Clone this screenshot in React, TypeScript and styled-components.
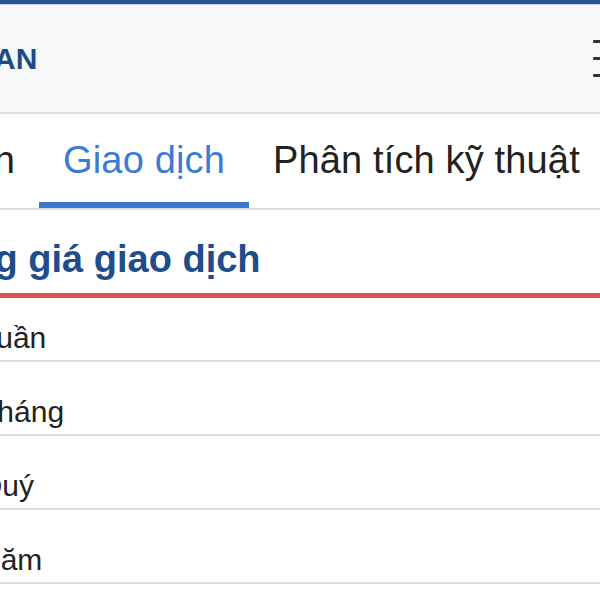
import styled, { createGlobalStyle } from 'styled-components';

const GlobalStyle = createGlobalStyle`
  html, body {
    margin: 0;
    padding: 0;
    background: #ffffff;
    overflow: hidden;
  }
  body {
    font-family: "Liberation Sans", Arial, sans-serif;
  }
`;

// the screenshot shows a horizontally scrolled view, so the page is shifted left
const Viewport = styled.div`
  width: 600px;
  height: 600px;
  overflow: hidden;
`;

const Page = styled.div`
  width: 840px;
  margin-left: -200px;
`;

const TopBar = styled.div`
  height: 4px;
  background: #2a5694;
  border-bottom: 1px solid #c9d5ea;
`;

const Header = styled.header`
  height: 109px;
  box-sizing: border-box;
  display: flex;
  align-items: center;
  justify-content: space-between;
  padding: 0 17px 0 54px;
  background: #f7f8fa;
  border-bottom: 2px solid #dedfe1;
`;

const Logo = styled.div`
  font-size: 30px;
  line-height: 30px;
  font-weight: 700;
  color: #1e4b86;
  white-space: nowrap;
`;

const MenuButton = styled.button`
  width: 30px;
  padding: 0;
  border: none;
  background: none;
  display: flex;
  flex-direction: column;
  gap: 14px;
`;

const MenuBar = styled.span`
  display: block;
  height: 3px;
  background: #333;
  border-radius: 1px;
`;

const Tabs = styled.nav`
  display: flex;
  padding-left: 8px;
  border-bottom: 2px solid #dcdcdc;
  background: #fff;
`;

const Tab = styled.div<{ $active?: boolean }>`
  height: 94px;
  box-sizing: border-box;
  padding: 27px 24px 0;
  font-size: 38px;
  line-height: 38px;
  letter-spacing: 0.15px;
  white-space: nowrap;
  color: ${(p) => (p.$active ? '#3b7bd3' : '#222')};
  border-bottom: 6px solid ${(p) => (p.$active ? '#3b78cf' : 'transparent')};
`;

const Heading = styled.h2`
  margin: 0;
  padding: 30px 0 15px 32px;
  font-size: 38px;
  line-height: 38px;
  font-weight: 700;
  color: #1f4c8a;
  white-space: nowrap;
  border-bottom: 5px solid #d9534f;
`;

const Row = styled.div`
  height: 74px;
  box-sizing: border-box;
  display: flex;
  align-items: flex-end;
  padding: 0 0 7px 179px;
  font-size: 30px;
  line-height: 30px;
  color: #222;
  border-bottom: 2px solid #dcdcdc;

  &:first-of-type {
    height: 64px;
  }
`;

const periods = ['Tuần', 'Tháng', 'Quý', 'Năm'];

const App = () => {
  return (
    <>
      <GlobalStyle />
      <Viewport>
        <Page>
          <TopBar />
          <Header>
            <Logo>TỔNG QUAN</Logo>
            <MenuButton aria-label="Menu">
              <MenuBar />
              <MenuBar />
              <MenuBar />
            </MenuButton>
          </Header>
          <Tabs>
            <Tab>Tổng quan</Tab>
            <Tab $active>Giao dịch</Tab>
            <Tab>Phân tích kỹ thuật</Tab>
          </Tabs>
          <Heading>Biến động giá giao dịch</Heading>
          <div>
            {periods.map((p) => (
              <Row key={p}>{p}</Row>
            ))}
          </div>
        </Page>
      </Viewport>
    </>
  );
};

export default App;
